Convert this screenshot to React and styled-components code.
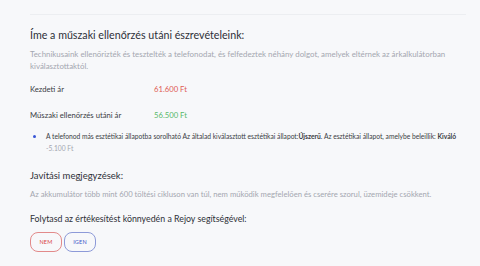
import React from 'react'
import styled, { createGlobalStyle } from 'styled-components'

const Global = createGlobalStyle`
  body {
    margin: 0;
    background: #f7f8fa;
    font-family: Lato, "Open Sans", sans-serif;
  }
`;

const Page = styled.div`
  width: 480px;
  height: 266px;
  box-sizing: border-box;
  padding: 14px 14px 0 30px;
  background: #f7f8fa;
`;

const Divider = styled.div`
  height: 1px;
  background: #eceef1;
`;

const Title = styled.h2`
  margin: 13px 0 0;
  font-size: 10.7px;
  font-weight: 400;
  color: #2e3038;
  line-height: 14px;
`;

const Muted = styled.p`
  margin: ${(p) => p.mt || 0}px 0 0;
  font-size: ${(p) => p.size || 7.9}px;
  line-height: 12px;
  color: #a4a7b0;
`;

const PriceRow = styled.div`
  display: flex;
  align-items: center;
  margin-top: ${(p) => p.mt}px;
  font-size: 7.7px;
  line-height: 12px;
`;

const Label = styled.span`
  width: 124px;
  color: #3a3c44;
`;

const Value = styled.span`
  color: ${(p) => (p.green ? '#58b96a' : '#e05c55')};
`;

const Note = styled.div`
  display: flex;
  margin-top: 9px;
  padding-left: 3px;
  font-size: 6.7px;
  line-height: 12px;
  color: #3a3c44;
`;

const Dot = styled.span`
  flex: none;
  width: 3px;
  height: 3px;
  margin-top: 5px;
  margin-right: 10px;
  border-radius: 50%;
  background: #3755d6;
`;

const Diff = styled.div`
  color: #a4a7b0;
`;

const SubTitle = styled.h3`
  margin: ${(p) => p.mt}px 0 0;
  font-size: ${(p) => p.size}px;
  font-weight: 400;
  line-height: 12px;
  color: #2e3038;
`;

const Buttons = styled.div`
  display: flex;
  gap: 2px;
  margin-top: 7px;
`;

const Btn = styled.button`
  width: 32px;
  height: 20px;
  padding: 0;
  border-radius: 8px;
  border: 1px solid ${(p) => (p.yes ? '#8d9ad8' : '#e28a8a')};
  background: transparent;
  color: ${(p) => (p.yes ? '#3d55c8' : '#d84545')};
  font-family: inherit;
  font-size: 5.5px;
  letter-spacing: 0.2px;
`;

export default function App() {
  return (
    <Page>
      <Global />
      <Divider />
      <Title>Íme a műszaki ellenőrzés utáni észrevételeink:</Title>
      <Muted mt={6}>
        Technikusaink ellenőrizték és tesztelték a telefonodat, és felfedeztek néhány dolgot, amelyek eltérnek az árkalkulátorban kiválasztottaktól.
      </Muted>
      <PriceRow mt={11}>
        <Label>Kezdeti ár</Label>
        <Value>61.600 Ft</Value>
      </PriceRow>
      <PriceRow mt={14}>
        <Label>Műszaki ellenőrzés utáni ár</Label>
        <Value green>56.500 Ft</Value>
      </PriceRow>
      <Note>
        <Dot />
        <div>
          A telefonod más esztétikai állapotba sorolható Az általad kiválasztott esztétikai állapot:<b>Újszerű</b>. Az esztétikai állapot, amelybe beleillik: <b>Kiváló</b>
          <Diff>-5.100 Ft</Diff>
        </div>
      </Note>
      <SubTitle mt={16} size={9.5}>Javítási megjegyzések:</SubTitle>
      <Muted mt={6} size={7.7}>
        Az akkumulátor több mint 600 töltési cikluson van túl, nem működik megfelelően és cserére szorul, üzemideje csökkent.
      </Muted>
      <SubTitle mt={13} size={8.8}>Folytasd az értékesítést könnyedén a Rejoy segítségével:</SubTitle>
      <Buttons>
        <Btn>NEM</Btn>
        <Btn yes>IGEN</Btn>
      </Buttons>
    </Page>
  )
}
